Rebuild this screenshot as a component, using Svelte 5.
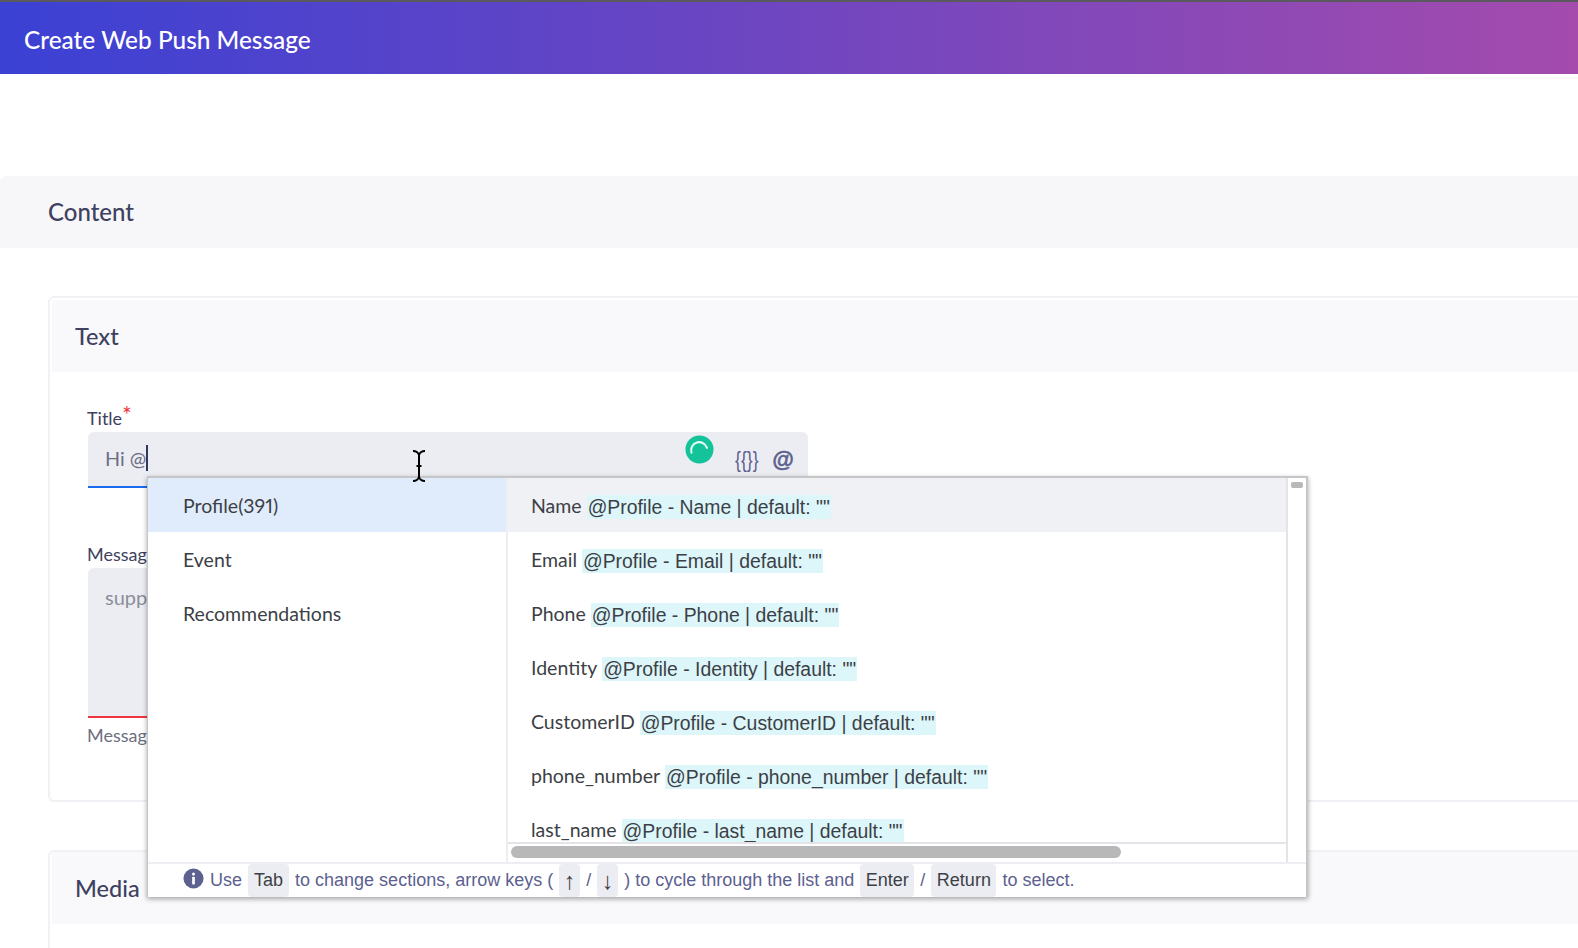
<script>
  const sections = ['Profile(391)', 'Event', 'Recommendations'];
  const tags = ['Name', 'Email', 'Phone', 'Identity', 'CustomerID', 'phone_number', 'last_name'];
</script>

<div class="page">
  <header class="topbar">Create Web Push Message</header>

  <section class="content">
    <div class="content-head">Content</div>

    <div class="card">
      <div class="card-head">Text</div>
      <div class="card-body">
        <label class="label" for="title">Title<span class="req">*</span></label>
        <div class="input" id="title">
          <span class="value">Hi @</span><span class="caret"></span>
          <svg class="grammarly" viewBox="0 0 30 30" aria-hidden="true">
            <circle cx="15" cy="15" r="14.5" fill="#15c39a" />
            <path d="M6.7 18.3A8.3 8.3 0 0 1 22.7 13.3" fill="none" stroke="#e6fbf5" stroke-width="2.2" stroke-linecap="round" />
          </svg>
          <span class="tool braces">&#123;&#123;&#125;&#125;</span>
          <span class="tool at">@</span>
        </div>

        <label class="label second" for="message">Message<span class="req">*</span></label>
        <div class="textarea" id="message">support</div>
        <div class="helper">Message is required</div>
      </div>
    </div>

    <div class="card media">
      <div class="card-head">Media</div>
    </div>
  </section>

  <div class="dropdown">
    <div class="panes">
      <ul class="sections">
        {#each sections as s, i}
          <li class:active={i === 0}>{s}</li>
        {/each}
      </ul>
      <div class="list-wrap">
        <ul class="list">
          {#each tags as t, i}
            <li class:active={i === 0}>
              <span class="name">{t}</span>
              <span class="tag">@Profile - {t} | default: ""</span>
            </li>
          {/each}
        </ul>
        <div class="hscroll"><span class="hthumb"></span></div>
      </div>
      <div class="vscroll"><span class="vthumb"></span></div>
    </div>
    <div class="hint">
      <svg class="info" viewBox="0 0 22 22" aria-hidden="true">
        <circle cx="11" cy="11" r="10.5" fill="#5c6190" />
        <circle cx="11" cy="6.2" r="1.6" fill="#fff" />
        <rect x="9.6" y="9.2" width="2.8" height="8" rx="0.6" fill="#fff" />
      </svg>
      <span class="use">Use</span>
      <kbd class="k-tab">Tab</kbd>
      <span>to change sections, arrow keys (</span>
      <kbd class="k-arrow">↑</kbd>
      <span>/</span>
      <kbd class="k-arrow">↓</kbd>
      <span>) to cycle through the list and</span>
      <kbd class="k-enter">Enter</kbd>
      <span>/</span>
      <kbd class="k-enter">Return</kbd>
      <span>to select.</span>
    </div>
  </div>

  <svg class="ibeam" viewBox="0 0 16 34" aria-hidden="true">
    <path d="M2 2c3 0 5 1 6 4 1-3 3-4 6-4M8 6v22M2 32c3 0 5-1 6-4 1 3 3 4 6 4M5.5 17h5" fill="none" stroke="#000" stroke-width="2" />
  </svg>
</div>

<style>
  :global(body) {
    margin: 0;
    background: #fff;
  }

  .page {
    position: relative;
    width: 1578px;
    height: 948px;
    overflow: hidden;
    font-family: Lato, "Open Sans", sans-serif;
    color: #3e4160;
  }

  .topbar {
    box-sizing: border-box;
    height: 74px;
    border-top: 2px solid #5a5a5e;
    padding: 3px 0 0 24px;
    display: flex;
    align-items: center;
    font-size: 24.4px;
    font-weight: 500;
    color: #fff;
    background: linear-gradient(90deg, #3b41d4 0%, #a44bad 100%);
  }

  .content {
    margin-top: 102px;
  }

  .content-head {
    box-sizing: border-box;
    height: 72px;
    padding: 0 0 2px 48px;
    display: flex;
    align-items: center;
    background: #f7f7fa;
    border-radius: 6px 0 0 0;
    font-size: 24px;
    font-weight: 500;
  }

  .card {
    box-sizing: border-box;
    width: 1600px;
    margin: 48px 0 0 48px;
    padding: 2px 0 0 2px;
    border: 2px solid #f1f1f5;
    border-right: 0;
    border-radius: 6px 0 0 6px;
  }

  .card.media {
    margin-top: 48px;
    padding-top: 0;
    height: 120px;
    border-bottom: 0;
  }

  .card-head {
    height: 72px;
    padding-left: 23px;
    display: flex;
    align-items: center;
    background: #f9f9fb;
    font-size: 23.5px;
    font-weight: 500;
  }

  .card-body {
    box-sizing: border-box;
    padding: 34px 0 53px 36px;
  }

  .label {
    display: block;
    height: 26px;
    line-height: 24px;
    margin-left: -1px;
    font-size: 18px;
  }

  .label.second {
    margin-top: 54px;
  }

  .req {
    color: #f0353f;
    vertical-align: 2px;
    font-size: 23px;
    line-height: 0;
  }

  .input {
    position: relative;
    box-sizing: border-box;
    width: 720px;
    height: 56px;
    padding: 0 0 2px 17px;
    display: flex;
    align-items: center;
    background: #ecedf2;
    border-bottom: 2px solid #1a6bf0;
    border-radius: 6px 6px 0 0;
    font-size: 19.8px;
    color: #6b6e85;
  }

  .value {
    white-space: pre;
  }

  .caret {
    width: 2px;
    height: 26px;
    background: #34385c;
  }

  .grammarly {
    position: absolute;
    left: 597px;
    top: 3px;
    width: 29px;
    height: 29px;
  }

  .tool {
    position: absolute;
    top: 15px;
    font-family: "Liberation Sans", sans-serif;
    color: #5c6190;
    font-size: 22px;
    line-height: 26px;
  }

  .braces {
    left: 647px;
    transform: scaleX(0.8);
    transform-origin: left center;
  }

  .at {
    left: 684px;
    font-size: 22px;
    font-weight: 700;
    font-style: italic;
    -webkit-text-stroke: 0.5px #5c6190;
  }

  .textarea {
    box-sizing: border-box;
    width: 720px;
    height: 150px;
    padding: 17px 17px;
    background: #ecedf2;
    border-bottom: 2px solid #f0353f;
    border-radius: 6px 6px 0 0;
    font-size: 20px;
    color: #8b8d9b;
  }

  .helper {
    margin-top: 5px;
    height: 24px;
    line-height: 24px;
    margin-left: -1px;
    font-size: 18px;
    color: #6d6f80;
  }

  .dropdown {
    position: absolute;
    left: 147px;
    top: 476px;
    box-sizing: border-box;
    width: 1161px;
    height: 421px;
    background: #fff;
    border: 2px solid #c6c6c8;
    border-left-width: 1px;
    border-bottom: 0;
    box-shadow: 0 2px 5px rgba(0, 0, 0, 0.35);
    display: flex;
    flex-direction: column;
  }

  .panes {
    display: flex;
    height: 384px;
    flex: none;
  }

  ul {
    list-style: none;
    margin: 0;
    padding: 0;
  }

  .sections {
    width: 358px;
    flex: none;
    font-size: 19.5px;
    font-feature-settings: "pnum";
    color: #3d3f46;
  }

  .sections li {
    height: 54px;
    padding-left: 35px;
    display: flex;
    align-items: center;
  }

  .sections li.active {
    background: #e0ecfc;
  }

  .list-wrap {
    position: relative;
    width: 780px;
    border-left: 2px solid #eeeef2;
    box-sizing: border-box;
    flex: none;
    display: flex;
    flex-direction: column;
  }

  .list {
    height: 364px;
    overflow: hidden;
    border-bottom: 2px solid #e4e4e8;
    flex: none;
  }

  .list li {
    height: 54px;
    padding-left: 23px;
    display: flex;
    align-items: center;
    gap: 5px;
    color: #3d3f46;
    white-space: nowrap;
  }

  .list li.active {
    background: #f0f1f5;
  }

  .name {
    font-size: 19.5px;
  }

  .tag {
    padding: 0 1px;
    line-height: 24px;
    margin-top: 3px;
    background: #dcf6fa;
    font-family: "Liberation Sans", sans-serif;
    font-size: 19.4px;
  }

  .hscroll {
    flex: 1;
    padding: 2px 0 0 3px;
  }

  .hthumb {
    display: block;
    width: 610px;
    height: 12px;
    border-radius: 6px;
    background: #b8b8b8;
  }

  .vscroll {
    flex: 1;
    border-left: 2px solid #e4e4e8;
    padding: 4px 3px 0;
  }

  .vthumb {
    display: block;
    height: 6px;
    border-radius: 2px;
    background: #b8b8b8;
  }

  .hint {
    flex: 1;
    border-top: 2px solid #eeeef2;
    padding-left: 35px;
    display: flex;
    align-items: center;
    gap: 6px;
    font-family: "Liberation Sans", sans-serif;
    font-size: 18px;
    color: #5c6190;
    white-space: nowrap;
  }

  .info {
    width: 21px;
    height: 21px;
    margin-top: -4px;
  }

  kbd {
    height: 100%;
    display: flex;
    align-items: center;
    padding: 0 6px;
    background: #ecedf2;
    border-radius: 4px;
    font-family: inherit;
    color: #3d3f46;
  }

  .k-arrow {
    font-size: 24px;
    padding: 0 4.5px;
  }

  .k-enter {
    padding: 0 5.5px;
  }

  .ibeam {
    position: absolute;
    left: 411px;
    top: 449px;
    width: 16px;
    height: 34px;
  }
</style>
